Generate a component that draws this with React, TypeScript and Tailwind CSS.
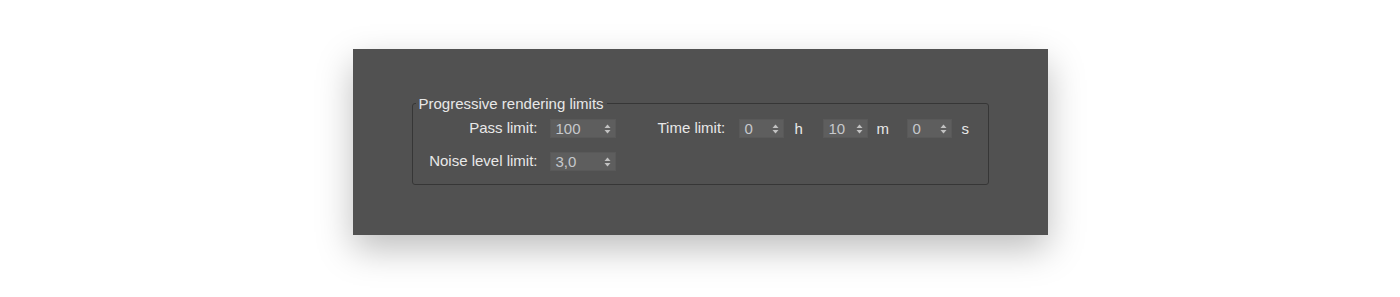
import React from 'react'

const FONT = { fontFamily: '"Liberation Sans", Arial, sans-serif' }

function Arrows() {
  return (
    <svg width="7" height="10" viewBox="0 0 7 10" className="shrink-0">
      <path d="M3.5 0.5 L6.5 4 L0.5 4 Z" fill="#c2c2c2" />
      <path d="M3.5 9.5 L6.5 6 L0.5 6 Z" fill="#c2c2c2" />
    </svg>
  )
}

function Spinner({ value, width }: { value: string; width: string }) {
  return (
    <div className={`${width} h-[19px] flex items-center justify-between pl-[5px] pr-[4px] bg-[#5e5e5e] border border-[#595959]`}>
      <span className="text-[15px] leading-none text-[#c6c8cc] -mt-[1px]">{value}</span>
      <Arrows />
    </div>
  )
}

export default function App() {
  return (
    <div className="w-full h-[297px] bg-white flex justify-center pt-[49px]" style={FONT}>
      {/* Dialog panel */}
      <div className="w-[695px] h-[186px] bg-[#515151] pt-[46px] pl-[59px] shadow-[0_14px_34px_rgba(0,0,0,0.26)]">
        <fieldset className="w-[577px] h-[90px] border border-[#363636] rounded-[3px] pl-0">
          <legend className="ml-[3px] px-[3px] text-[15px] leading-[17px] text-[#e8e8e8]">
            Progressive rendering limits
          </legend>

          <div className="flex flex-col gap-[14px] pt-[7px] text-[15px] text-[#e8e8e8]">
            {/* Row 1 */}
            <div className="flex items-center">
              <span className="w-[125px] text-right leading-none -mt-[2px]">Pass limit:</span>
              <div className="ml-[12px]">
                <Spinner value="100" width="w-[66px]" />
              </div>
              <span className="ml-[42px] w-[81px] leading-none -mt-[2px]">Time limit:</span>
              <Spinner value="0" width="w-[45px]" />
              <span className="w-[39px] pl-[11px] leading-none">h</span>
              <Spinner value="10" width="w-[45px]" />
              <span className="w-[39px] pl-[9px] leading-none">m</span>
              <Spinner value="0" width="w-[45px]" />
              <span className="pl-[10px] leading-none">s</span>
            </div>

            {/* Row 2 */}
            <div className="flex items-center">
              <span className="w-[125px] text-right leading-none -mt-[2px]">Noise level limit:</span>
              <div className="ml-[12px]">
                <Spinner value="3,0" width="w-[66px]" />
              </div>
            </div>
          </div>
        </fieldset>
      </div>
    </div>
  )
}
